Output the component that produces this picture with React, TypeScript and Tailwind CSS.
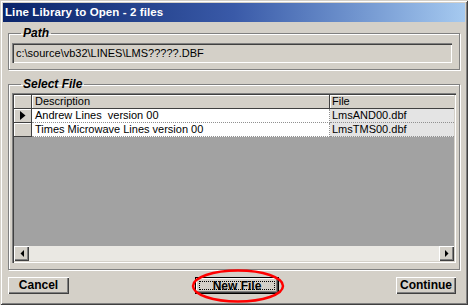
import React from "react";

const raised =
  "shadow-[inset_1px_1px_0_#ffffff,inset_-1px_-1px_0_#404040,inset_-2px_-2px_0_#808080]";
const sunken =
  "shadow-[inset_1px_1px_0_#808080,inset_2px_2px_0_#404040,inset_-1px_-1px_0_#ffffff,inset_-2px_-2px_0_#d4d0c8]";

function Arrow({ dir }: { dir: "left" | "right" }) {
  return (
    <svg width="4" height="7" viewBox="0 0 4 7">
      {dir === "left" ? (
        <polygon points="4,0 4,7 0.5,3.5" fill="#000" />
      ) : (
        <polygon points="0,0 0,7 3.5,3.5" fill="#000" />
      )}
    </svg>
  );
}

const rows = [
  { desc: "Andrew Lines  version 00", file: "LmsAND00.dbf", current: true },
  { desc: "Times Microwave Lines version 00", file: "LmsTMS00.dbf", current: false },
];

export default function App() {
  return (
    <div className="relative w-[468px] h-[305px] overflow-hidden bg-[#d4d0c8] p-[3px] text-black font-['Liberation_Sans',Arial,sans-serif] shadow-[inset_1px_1px_0_#d4d0c8,inset_-1px_-1px_0_#404040,inset_2px_2px_0_#ffffff,inset_-2px_-2px_0_#808080]">
      {/* Title bar */}
      <div className="h-[19px] flex items-center pl-[2px] bg-linear-to-r from-[#0a246a] via-[#3a5aa8] to-[#a6caf0]">
        <span className="text-white text-[11.5px] font-bold leading-none whitespace-pre tracking-[0.1px]">
          Line Library to Open - 2 files
        </span>
      </div>

      {/* Path */}
      <fieldset className="mx-[5px] mt-[5px] border border-[#808080] shadow-[1px_1px_0_#ffffff,inset_1px_1px_0_#ffffff] pl-[3px] pr-[7px] pb-[6px]">
        <legend className="ml-[9px] px-[2px] text-[12px] font-bold italic leading-[12px]">
          Path
        </legend>
        <div className={`mt-[4px] h-[20px] pl-[4px] text-[11px] leading-[20px] ${sunken}`}>
          c:\source\vb32\LINES\LMS?????.DBF
        </div>
      </fieldset>

      {/* Select File */}
      <fieldset className="mx-[5px] mt-[8px] border border-[#808080] shadow-[1px_1px_0_#ffffff,inset_1px_1px_0_#ffffff] pl-[3px] pr-[3px] pb-[6px]">
        <legend className="ml-[9px] px-[2px] text-[12px] font-bold italic leading-[12px]">
          Select File
        </legend>
        <div className={`mt-[3px] h-[170px] p-[2px] bg-[#d4d0c8] ${sunken}`}>
          <div className="h-full flex flex-col bg-[#a2a2a2] text-[11px]">
            {/* header */}
            <div className="flex h-[14px] bg-[#d4d0c8] leading-[13px]">
              <div className="w-[18px] border-r border-b border-[#404040] shadow-[inset_1px_1px_0_#ffffff]" />
              <div className="w-[298px] pl-[3px] border-r border-b border-[#404040] shadow-[inset_1px_1px_0_#ffffff]">
                Description
              </div>
              <div className="flex-1 pl-[2px] border-b border-[#404040] shadow-[inset_1px_1px_0_#ffffff]">
                File
              </div>
            </div>
            {rows.map((r) => (
              <div key={r.file} className="flex h-[14px] leading-[13px]">
                <div className="w-[18px] flex items-center justify-center bg-[#d4d0c8] border-r border-b border-[#404040] shadow-[inset_1px_1px_0_#ffffff]">
                  {r.current && (
                    <svg width="6" height="9" viewBox="0 0 6 9">
                      <polygon points="0,0 0,9 5.5,4.5" fill="#000" />
                    </svg>
                  )}
                </div>
                <div className="w-[298px] pl-[3px] bg-white border-r border-b border-dotted border-[#909090] whitespace-pre">
                  {r.desc}
                </div>
                <div className="flex-1 pl-[2px] bg-[#e4e4e4] border-b border-dotted border-[#909090]">
                  {r.file}
                </div>
              </div>
            ))}
            <div className="flex-1" />
            {/* horizontal scrollbar */}
            <div className="flex h-[15px] bg-[#eae8e3]">
              <div className={`w-[15px] h-[15px] flex items-center justify-center bg-[#d4d0c8] ${raised}`}>
                <Arrow dir="left" />
              </div>
              <div className="flex-1" />
              <div className={`w-[15px] h-[15px] flex items-center justify-center bg-[#d4d0c8] ${raised}`}>
                <Arrow dir="right" />
              </div>
            </div>
          </div>
        </div>
      </fieldset>

      {/* Buttons */}
      <div className="flex mt-[7px] pl-[5px] pr-[9px] text-[12px] font-bold">
        <button className={`w-[61px] h-[17px] bg-[#d4d0c8] leading-[15px] ${raised}`}>
          Cancel
        </button>
        <button className="ml-[126px] w-[84px] h-[17px] border border-black bg-[#d4d0c8] p-[3px] leading-none shadow-[inset_1px_1px_0_#ffffff,inset_-1px_-1px_0_#404040,inset_-2px_-2px_0_#808080]">
          <span className="flex h-full items-center justify-center border border-dotted border-black">
            New File
          </span>
        </button>
        <button className={`ml-auto w-[60px] h-[17px] bg-[#d4d0c8] leading-[15px] ${raised}`}>
          Continue
        </button>
      </div>

      {/* red annotation ellipse */}
      <svg
        className="absolute left-[190px] top-[268px]"
        width="98"
        height="36"
        viewBox="0 0 98 36"
      >
        <ellipse cx="48" cy="18" rx="45" ry="15.5" fill="none" stroke="#ff0000" strokeWidth="2.5" />
      </svg>
    </div>
  );
}
